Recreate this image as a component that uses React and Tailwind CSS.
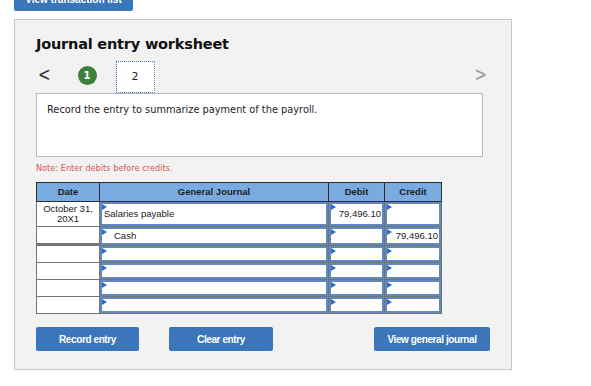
import React from 'react';

const rows = [
  { date: ['October 31,', '20X1'], account: 'Salaries payable', indent: false, debit: '79,496.10', credit: '', tall: true },
  { date: null, account: 'Cash', indent: true, debit: '', credit: '79,496.10' },
  { date: null, account: '', debit: '', credit: '' },
  { date: null, account: '', debit: '', credit: '' },
  { date: null, account: '', debit: '', credit: '' },
  { date: null, account: '', debit: '', credit: '' },
];

// little blue marker in the corner of each editable cell
function Marker() {
  return (
    <span className="absolute left-0 top-0 w-0 h-0 border-t-[3px] border-b-[3px] border-l-[5px] border-t-transparent border-b-transparent border-l-[#2c6cc4]" />
  );
}

function InputCell({ children, align = 'left', indent }) {
  return (
    <div className="relative bg-white border-2 border-[#6189be] flex items-center h-full">
      <Marker />
      <span
        className={
          'w-full text-[9.5px] text-[#222] ' +
          (align === 'right' ? 'text-right pr-[1px]' : indent ? 'pl-[12px]' : 'pl-[2px]')
        }
      >
        {children}
      </span>
    </div>
  );
}

function Button({ children, className }) {
  return (
    <button
      className={
        'h-[24px] rounded-[2px] bg-[#3a76b9] text-white font-bold text-[10px] tracking-[-0.4px] ' +
        className
      }
    >
      {children}
    </button>
  );
}

export default function App() {
  return (
    <div className="w-[591px] h-[386px] bg-white overflow-hidden font-['DejaVu_Sans',sans-serif]">
      <div className="ml-[14px] -mt-[12px] w-[119px] h-[23px] rounded-[2px] bg-[#3a76b9] text-white text-[10px] font-bold flex items-center justify-center font-['Liberation_Sans',sans-serif]">
        View transaction list
      </div>

      <div className="ml-[14px] mt-[8px] w-[498px] h-[351px] bg-[#f2f2f2] border border-[#c6c6c6] pl-[21px]">
        <h1 className="mt-[15px] text-[14.5px] font-bold text-[#111] leading-[18px] tracking-[-0.2px]">
          Journal entry worksheet
        </h1>

        <div className="mt-[8px] flex items-end h-[32px] w-[447px]">
          <span className="text-[15px] text-[#333] mb-[10px] ml-[2px] leading-none scale-y-125">&lt;</span>
          <div className="ml-[27px] mb-[8px] w-[19px] h-[19px] rounded-full bg-[#3f7f3c] text-white text-[10px] font-bold flex items-center justify-center">
            1
          </div>
          <div className="ml-[19px] w-[39px] h-[32px] bg-white border border-dotted border-[#3a6fc0] border-r-[#888] flex items-center justify-center text-[11px] text-[#222]">
            2
          </div>
          <span className="ml-auto mr-[-4px] text-[15px] text-[#999] mb-[10px] leading-none scale-y-125">&gt;</span>
        </div>

        <div className="w-[447px] h-[64px] bg-white border border-[#b9b9b9] pl-[10px] pt-[9px] text-[9.8px] text-[#222]">
          Record the entry to summarize payment of the payroll.
        </div>

        <p className="mt-[6px] text-[8px] text-[#d4574f] tracking-[0.1px]">Note: Enter debits before credits.</p>

        <div className="mt-[7px] w-[406px] font-['Liberation_Sans',sans-serif]">
          <div className="grid grid-cols-[62px_228px_55px_56px] gap-px p-px bg-[#2e2e2e]">
            {['Date', 'General Journal', 'Debit', 'Credit'].map((h) => (
              <div key={h} className="h-[18px] bg-[#79abe1] flex items-center justify-center text-[9.5px] font-bold text-[#1d1d1d]">
                {h}
              </div>
            ))}
          </div>
          <div className="grid grid-cols-[62px_228px_55px_56px] gap-px px-px pb-px bg-[#747474]">
            {rows.map((r, i) => (
              <React.Fragment key={i}>
                <div className={(r.tall ? 'h-[24px]' : 'h-[16px]') + ' bg-white flex flex-col items-center justify-center text-[9.5px] leading-[10px] text-[#222]'}>
                  {r.date && r.date.map((d) => <span key={d}>{d}</span>)}
                </div>
                <InputCell indent={r.indent}>{r.account}</InputCell>
                <InputCell align="right">{r.debit}</InputCell>
                <InputCell align="right">{r.credit}</InputCell>
              </React.Fragment>
            ))}
          </div>
        </div>

        <div className="mt-[13px] flex w-[454px] font-['Liberation_Sans',sans-serif]">
          <Button className="w-[103px]">Record entry</Button>
          <Button className="w-[104px] ml-[30px]">Clear entry</Button>
          <Button className="w-[116px] ml-auto">View general journal</Button>
        </div>
      </div>
    </div>
  );
}
